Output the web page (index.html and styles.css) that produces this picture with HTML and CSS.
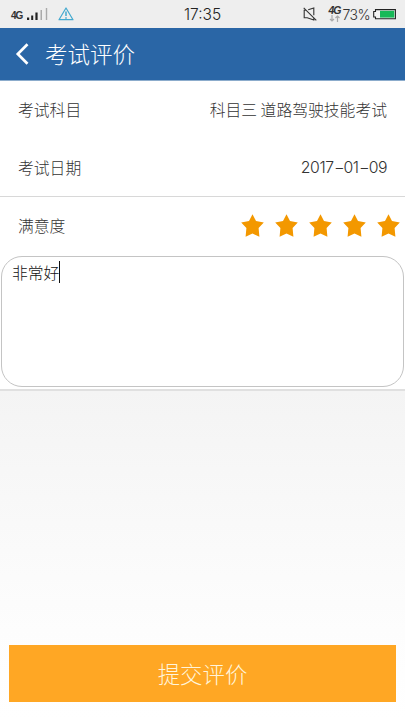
FILE: index.html
```html
<!DOCTYPE html>
<html lang="zh-CN">
<head>
<meta charset="utf-8">
<meta name="viewport" content="width=device-width, initial-scale=1">
<title>考试评价</title>
<link rel="stylesheet" href="styles.css">
</head>
<body>
<svg class="defs" width="0" height="0" aria-hidden="true">
  <symbol id="star" viewBox="0 0 23 23">
    <path d="M11.5 0.2L15 7L22.8 8.4L17.6 14.1L18.4 22.7L11.5 19.6L4.6 22.7L5.4 14.1L0.2 8.4L8 7Z"/>
  </symbol>
</svg>
<div class="screen">
  <div class="status">
    <div class="status-left">
      <span class="net">4G</span>
      <svg class="signal" width="21" height="13" viewBox="0 0 21 13">
        <path d="M0 10.5h2.2V13H0zM4.2 8.5h2V13h-2zM8.4 5.5h2.2V13H8.4z" fill="#222"/>
        <path d="M13.5 3H15v10h-1.5zM18.8 1h1.4v12h-1.4z" fill="#aaa"/>
      </svg>
      <svg class="warn" width="16" height="14" viewBox="0 0 16 14" fill="none" stroke="#43a9cf" stroke-width="1.2" stroke-linejoin="round">
        <path d="M8 1L15 12.7H1Z"/><path d="M8 4.5V9M8 10.3v1.4" stroke-width="1.5"/>
      </svg>
    </div>
    <span class="clock">17:35</span>
    <div class="status-right">
      <svg class="mute" width="14" height="14" viewBox="0 0 14 14" fill="none" stroke="#333" stroke-width="1.1">
        <path d="M3.5 3.3H1.2v7.5h3L10.8 13V10.5M5.2 2.8L10.8 .9V8.2M.7 .8L13.3 13.3"/>
      </svg>
      <span class="data"><b>4G</b>
        <svg width="11" height="7" viewBox="0 0 11 7" fill="none" stroke="#aaa" stroke-width="1.2"><path d="M3 0v6M1 4l2 2 2-2M8.5 7V1M6.5 3l2-2 2 2"/></svg>
      </span>
      <span class="percent">73%</span>
      <svg class="battery" width="23" height="11" viewBox="0 0 23 11">
        <path d="M2.5 .6H22.4v9.2H2.5V8H.7V2.5h1.8z" fill="#f4f4f4" stroke="#222" stroke-width="1.1"/>
        <path d="M7 1.8h14.3v6.8H7z" fill="#17b957"/>
      </svg>
    </div>
  </div>
  <header class="header">
    <svg width="14" height="22" viewBox="0 0 14 22" fill="none" stroke="#fff" stroke-width="2.7"><path d="M12.5 1.3L2.8 11L12.5 20.7"/></svg>
    <h1>考试评价</h1>
  </header>
  <main class="form">
    <div class="row"><span>考试科目</span><span>科目三 道路驾驶技能考试</span></div>
    <div class="row row-date"><span>考试日期</span><span class="date">2017<i class="dash">-</i>01<i class="dash">-</i>09</span></div>
    <div class="row row-rating">
      <span>满意度</span>
      <div class="stars">
        <svg><use href="#star"/></svg><svg><use href="#star"/></svg><svg><use href="#star"/></svg><svg><use href="#star"/></svg><svg><use href="#star"/></svg>
      </div>
    </div>
    <div class="comment"><span>非常好</span><i class="caret"></i></div>
  </main>
  <footer class="footer"><button class="submit">提交评价</button></footer>
</div>
</body>
</html>
```

FILE: styles.css
```css
* { box-sizing: border-box; }
body {
  margin: 0;
  font-family: "Noto Sans CJK SC", sans-serif;
  font-weight: 300;
  color: #333;
}
.defs { display: block; }
.screen {
  width: 405px;
  height: 720px;
  display: flex;
  flex-direction: column;
  overflow: hidden;
  background: linear-gradient(#f4f4f4 390px, #fdfdfd 630px, #fff);
}
.status {
  height: 28px;
  flex: none;
  display: grid;
  grid-template-columns: 1fr auto 1fr;
  align-items: center;
  background: #eee;
  font-family: Inter, sans-serif;
}
.status-left, .status-right { display: flex; align-items: center; }
.status-left { padding-left: 11px; }
.status-right { justify-content: flex-end; padding-right: 9px; }
.net { width: 16px; padding-top: 4px; font: 700 10px/12px "Liberation Sans", sans-serif; letter-spacing: -1px; }
.signal { margin-top: -2px; }
.warn { margin-left: 10px; margin-top: -1px; }
.clock { font-size: 15.5px; line-height: 20px; padding-top: 2px; color: #222; }
.data { display: flex; flex-direction: column; width: 14px; margin-left: 12px; }
.data b { font: italic 700 10.5px/9px "Liberation Sans", sans-serif; letter-spacing: -1.2px; }
.percent { font-size: 14px; line-height: 18px; letter-spacing: -.6px; padding-top: 1px; margin-right: 3px; }
.header {
  height: 53px;
  flex: none;
  display: flex;
  align-items: center;
  padding: 0 0 1px 15px;
  gap: 16px;
  background: #2a66a6;
  border-bottom: 1px solid #8caccc;
}
.header h1 { margin: -2px 0 0; font-size: 22.5px; line-height: 32px; font-weight: 300; color: #fff; }
.form { height: 310px; flex: none; background: #fff; border-bottom: 2px solid #e0e0e0; }
.row {
  height: 58px;
  display: flex;
  align-items: center;
  justify-content: space-between;
  padding: 0 18px;
  font-size: 15.8px;
  line-height: 24px;
}
.row-date { border-bottom: 1px solid #d8d8d8; }
.date { display: flex; font-family: Inter, sans-serif; font-size: 15.8px; letter-spacing: -.45px; }
.dash { width: 10px; font-style: normal; transform: scaleX(1.5); text-align: center; }
.row-rating { height: 59px; padding: 0 5.4px 2px 18px; }
.stars { display: flex; gap: 10.8px; }
.stars svg { width: 23px; height: 23px; fill: #f39800; }
.comment {
  height: 131px;
  margin: 0 1px;
  padding: 4px 10px;
  display: flex;
  align-items: flex-start;
  border: 1px solid #c4c4c4;
  border-radius: 21px;
  font-size: 15.8px;
  line-height: 24px;
  color: #111;
}
.caret { width: 1px; height: 22px; background: #111; }
.footer { margin-top: auto; padding: 0 9px 18px; }
.submit {
  display: block;
  width: 387px;
  height: 57px;
  padding: 0 0 2px;
  border: 0;
  background: #ffa724;
  font: 300 22.4px/32px "Noto Sans CJK SC", sans-serif;
  color: #fff5dc;
}
```
